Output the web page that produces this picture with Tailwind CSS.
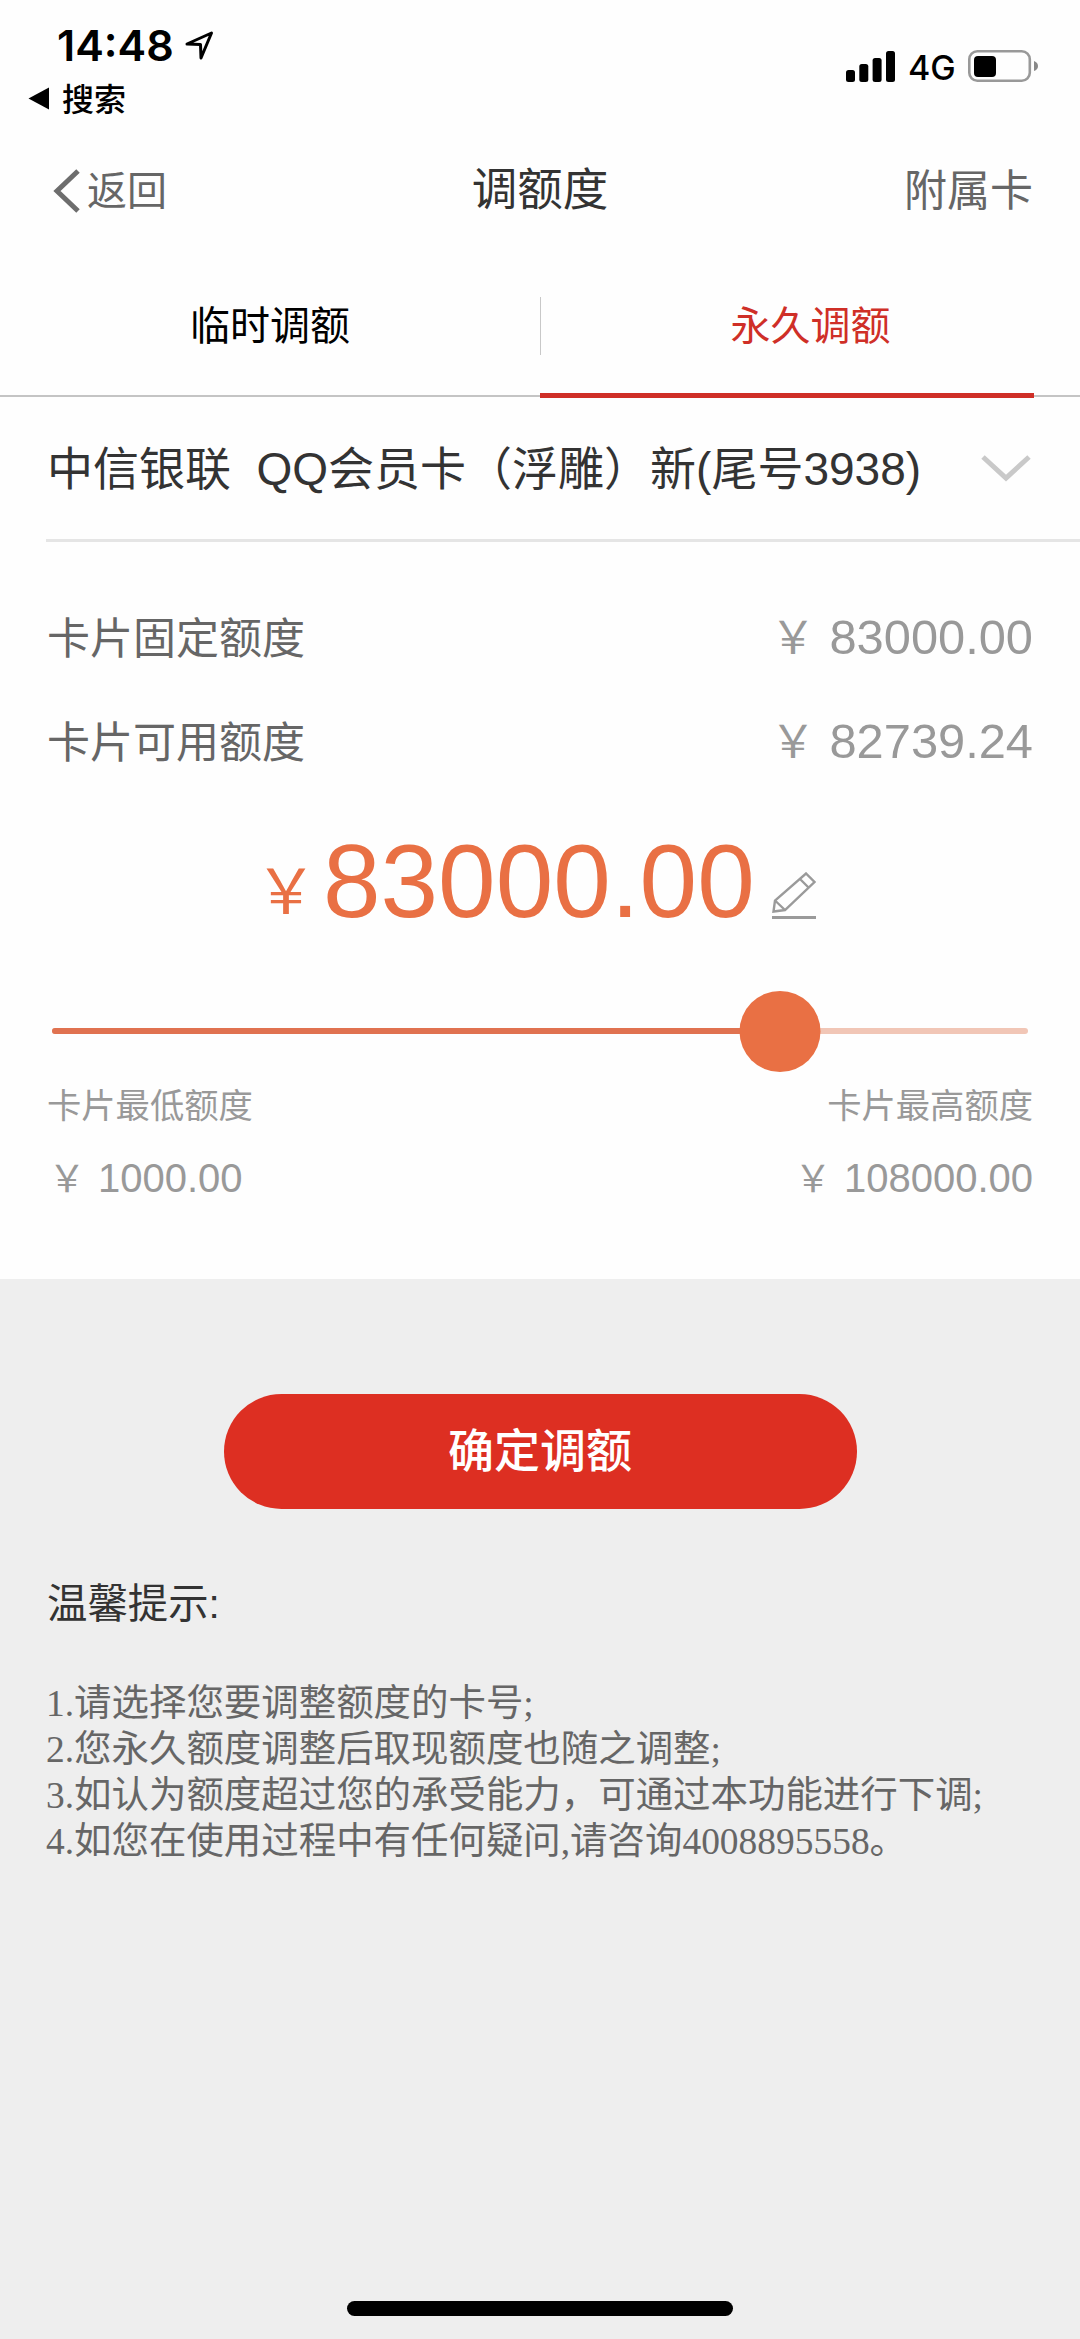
<!DOCTYPE html>
<html lang="zh-CN">
<head>
<meta charset="utf-8">
<title>调额度</title>
<script src="https://cdn.jsdelivr.net/npm/@tailwindcss/browser@4"></script>
</head>
<body class="bg-[#eeeeee]">
<div class="flex h-[2339px] w-[1080px] flex-col overflow-hidden font-['Liberation_Sans','Noto_Sans_CJK_SC',sans-serif]">
  <main class="h-[1279px] shrink-0 bg-[#fefefe]">
    <!-- status bar -->
    <header class="flex h-[135px] items-start justify-between pr-[41px] text-black">
      <div class="pl-7 pt-[19px]">
        <div class="flex h-[52px] items-center gap-[13px] pl-[29px]">
          <span class="w-[115px] whitespace-nowrap font-['Inter',sans-serif] text-[43px] font-semibold leading-[52px]">14:48</span>
          <svg class="size-[29px]" viewBox="0 0 29 29" fill="none" stroke="#000" stroke-width="3" stroke-linejoin="round"><path d="M2 13 L26.5 2 L16 27 L15.5 13.5 Z"/></svg>
        </div>
        <div class="flex h-[50px] items-center gap-[13px] pt-px">
          <svg class="mt-[3px] h-[23px] w-[21px]" viewBox="0 0 21 23"><path d="M0.5 11.5 L21 0.5 V22.5 Z"/></svg>
          <span class="font-['Noto_Sans_CJK_SC',sans-serif] text-[32px] font-medium leading-[50px]">搜索</span>
        </div>
      </div>
      <div class="flex items-start pt-[50px]">
        <svg class="h-[32px] w-[50px]" viewBox="0 0 50 32"><rect x="0" y="20" width="9" height="12" rx="2.5"/><rect x="13.300" y="14" width="9" height="18" rx="2.500"/><rect x="26.600" y="8" width="9" height="24" rx="2.500"/><rect x="40" y="1" width="9" height="31" rx="2.500"/></svg>
        <span class="ml-[12px] w-[47px] pt-[2px] font-['Inter',sans-serif] text-[34px] font-medium leading-[32px]">4G</span>
        <svg class="ml-[13px] h-[32px] w-[71px]" viewBox="0 0 71 32"><rect x="1.300" y="1.300" width="60.500" height="29.400" rx="8" fill="none" stroke="#999" stroke-width="2.600"/><rect x="6" y="6" width="22" height="21" rx="4"/><path d="M66 11 Q70 12.500 70 16 Q70 19.500 66 21 Z" fill="#888"/></svg>
      </div>
    </header>

    <!-- title bar -->
    <nav class="grid h-[110px] grid-cols-3 items-center px-[47px] pt-[2px] leading-[60px] text-[#666]">
      <div class="flex items-center gap-[7px] pl-[6px]">
        <svg class="h-[44px] w-[27px]" viewBox="0 0 27 44" fill="none" stroke="#6d6d6d" stroke-width="5"><path d="M25 2 L4 22 L25 42"/></svg>
        <span class="text-[40px]">返回</span>
      </div>
      <h1 class="text-center text-[45.500px] text-[#333]">调额度</h1>
      <span class="text-right text-[43px]">附属卡</span>
    </nav>

    <!-- tabs -->
    <div class="relative flex h-[152px] items-center border-b-2 border-[#c4c4c4] pt-[11px] text-center text-[40px] leading-[60px]">
      <div class="w-1/2 text-black">临时调额</div>
      <div class="h-[58px] w-px bg-[#c8c8c8]"></div>
      <div class="flex-1 text-[#cf2f27]">永久调额</div>
      <div class="absolute -bottom-[3px] left-[540px] h-[5px] w-[494px] bg-[#cf2f27]"></div>
    </div>

    <!-- card selector -->
    <div class="ml-[46px] flex h-[145px] items-center justify-between border-b-[3px] border-[#e5e5e5] pr-[49px]">
      <span class="whitespace-pre pl-px pt-[2px] text-[46px] leading-[60px] text-[#333]">中信银联  QQ会员卡（浮雕）新(尾号3938)</span>
      <svg class="h-[27px] w-[50px]" viewBox="0 0 50 27" fill="none" stroke="#c9c9c9" stroke-width="5"><path d="M2 2 L25 23 L48 2"/></svg>
    </div>

    <!-- current limits -->
    <dl class="px-[47px] pt-[44px]">
      <div class="flex h-[104px] items-center justify-between">
        <dt class="pt-[2px] text-[43px] text-[#666]">卡片固定额度</dt>
        <dd class="flex items-baseline gap-[12px] text-[48.800px] text-[#999]"><span class="w-[49px] text-center text-[45px]">￥</span>83000.00</dd>
      </div>
      <div class="flex h-[104px] items-center justify-between">
        <dt class="pt-[2px] text-[43px] text-[#666]">卡片可用额度</dt>
        <dd class="flex items-baseline gap-[12px] text-[48.800px] text-[#999]"><span class="w-[49px] text-center text-[45px]">￥</span>82739.24</dd>
      </div>
    </dl>

    <!-- amount -->
    <div class="mt-[12px] flex h-[150px] items-baseline pl-[254px] leading-[150px] text-[#e97044]">
      <span class="w-[69px] -translate-y-[3px] pl-px text-[62px]">￥</span>
      <span class="w-[433px] text-[103.500px]">83000.00</span>
      <svg class="ml-[16px] h-[47px] w-[44px] translate-y-[2px]" viewBox="0 0 44 47" fill="none" stroke="#9a9a9a" stroke-width="2.4"><path d="M1.500 39.500 L3 28.500 L34 1.500 L42.500 10 L13 38 Z M3 28.500 L13 38 M28 7 L36.500 15.500"/><path d="M0 45.500 H44" stroke-width="2.800"/></svg>
    </div>

    <!-- slider -->
    <div class="relative mt-[35px] ml-[52px] flex h-[80px] w-[976px] items-center">
      <div class="h-[6px] w-full overflow-hidden rounded-full bg-[#f1c6b6]"><div class="h-full bg-[#e07250]" style="width:74.6%"></div></div>
      <div class="absolute top-0 size-[81px] -translate-x-1/2 rounded-full bg-[#e97044]" style="left:74.6%"></div>
    </div>

    <!-- range -->
    <div class="flex justify-between px-[47px] text-[#999]">
      <div>
        <div class="h-[71px] text-[34.300px] leading-[71px]">卡片最低额度</div>
        <div class="flex h-[72px] items-baseline gap-[11px] text-[40px] leading-[72px]"><span class="w-[40px] text-center text-[37px]">￥</span>1000.00</div>
      </div>
      <div>
        <div class="h-[71px] text-right text-[34.300px] leading-[71px]">卡片最高额度</div>
        <div class="flex h-[72px] items-baseline gap-[11px] text-[40px] leading-[72px]"><span class="w-[40px] text-center text-[37px]">￥</span>108000.00</div>
      </div>
    </div>
  </main>

  <!-- submit and notes -->
  <section class="flex flex-1 flex-col pt-[115px]">
    <button class="mx-auto h-[115px] w-[633px] rounded-full bg-[#dd2f22] text-[46px] font-medium text-white">确定调额</button>
    <h2 class="mt-[65px] pl-[47px] text-[40.400px] leading-[60px] text-[#333]">温馨提示:</h2>
    <ol class="mt-[47px] pl-[46px] font-['Liberation_Serif','Noto_Sans_CJK_SC',serif] text-[37.450px] leading-[46px] text-[#666]">
      <li class="h-[46px]">1.请选择您要调整额度的卡号;</li>
      <li class="h-[46px]">2.您永久额度调整后取现额度也随之调整;</li>
      <li class="h-[46px]">3.如认为额度超过您的承受能力，可通过本功能进行下调;</li>
      <li class="h-[46px]">4.如您在使用过程中有任何疑问,请咨询4008895558。</li>
    </ol>
    <div class="mx-auto mt-auto mb-[23px] h-[15px] w-[386px] rounded-full bg-black"></div>
  </section>
</div>
</body>
</html>
